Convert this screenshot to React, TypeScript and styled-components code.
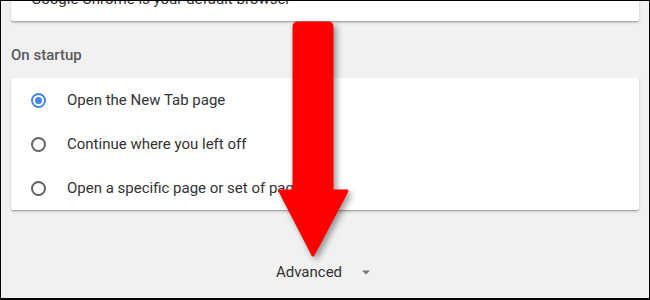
import { createGlobalStyle, styled } from "styled-components";

const GlobalStyle = createGlobalStyle`
  html, body {
    margin: 0;
    padding: 0;
    background: #000;
  }
  body {
    font-family: Roboto, "Liberation Sans", sans-serif;
  }
`;

const Page = styled.div`
  position: relative;
  box-sizing: border-box;
  width: 650px;
  height: 300px;
  overflow: hidden;
  border: 1px solid #000;
  border-bottom-width: 2px;
  background: #f1f1f1;
  padding: 0 10px;
  display: flex;
  flex-direction: column;
`;

const Card = styled.div<{ $clipTop?: boolean }>`
  background: #fff;
  border-radius: 2px;
  box-shadow: 0 1px 1px rgba(0, 0, 0, 0.22), 0 2px 3px rgba(0, 0, 0, 0.14);
  margin-top: ${(p) => (p.$clipTop ? "-24px" : "0")};
  display: flex;
  flex-direction: column;
`;

const InfoRow = styled.div`
  height: 44px;
  display: flex;
  align-items: center;
  padding-left: 20px;
  font-size: 15px;
  color: #333;
`;

const SectionTitle = styled.h2`
  margin: 26px 0 14px;
  font-size: 15px;
  line-height: 17px;
  font-weight: 500;
  color: #5a5a5a;
`;

const Option = styled.label`
  height: 44px;
  display: flex;
  align-items: center;
  gap: 21px;
  padding-left: 20px;
  font-size: 15px;
  color: #333;
`;

const Radio = styled.span<{ $checked?: boolean }>`
  box-sizing: border-box;
  width: 15px;
  height: 15px;
  border-radius: 50%;
  border: 2px solid ${(p) => (p.$checked ? "#4285f4" : "#5f6368")};
  display: flex;
  align-items: center;
  justify-content: center;
  &::after {
    content: "";
    width: 7px;
    height: 7px;
    border-radius: 50%;
    background: ${(p) => (p.$checked ? "#4285f4" : "transparent")};
  }
`;

const Footer = styled.div`
  flex: 1;
  display: flex;
  justify-content: center;
  align-items: flex-start;
  padding-top: 50px;
`;

const AdvancedButton = styled.button`
  border: none;
  background: none;
  padding: 0;
  display: flex;
  align-items: center;
  gap: 16px;
  font-family: Roboto, "Liberation Sans", sans-serif;
  font-size: 15px;
  color: #333;
  height: 24px;
`;

const Arrow = styled.svg`
  position: absolute;
  left: 270px;
  top: 18px;
  filter: drop-shadow(3px 3px 3px rgba(0, 0, 0, 0.4));
`;

const options = [
  { label: "Open the New Tab page", checked: true },
  { label: "Continue where you left off", checked: false },
  { label: "Open a specific page or set of pages", checked: false },
];

export default function App() {
  return (
    <>
      <GlobalStyle />
      <Page>
        <Card $clipTop>
          <InfoRow>Google Chrome is your default browser</InfoRow>
        </Card>
        <SectionTitle>On startup</SectionTitle>
        <Card>
          {options.map((o) => (
            <Option key={o.label}>
              <Radio $checked={o.checked} />
              {o.label}
            </Option>
          ))}
        </Card>
        <Footer>
          <AdvancedButton>
            Advanced
            <svg width="16" height="24" viewBox="0 0 16 24">
              <path d="M4 10.5h8l-4 4z" fill="#757575" />
            </svg>
          </AdvancedButton>
        </Footer>
        <Arrow width="90" height="250" viewBox="0 0 90 250">
          <path
            d="M27 4 H57 Q61 4 61 8 V172 H76 L42 236 L9 172 H23 V8 Q23 4 27 4 Z"
            fill="#ff0000"
            stroke="#ff0000"
            strokeWidth="3"
            strokeLinejoin="round"
          />
        </Arrow>
      </Page>
    </>
  );
}
